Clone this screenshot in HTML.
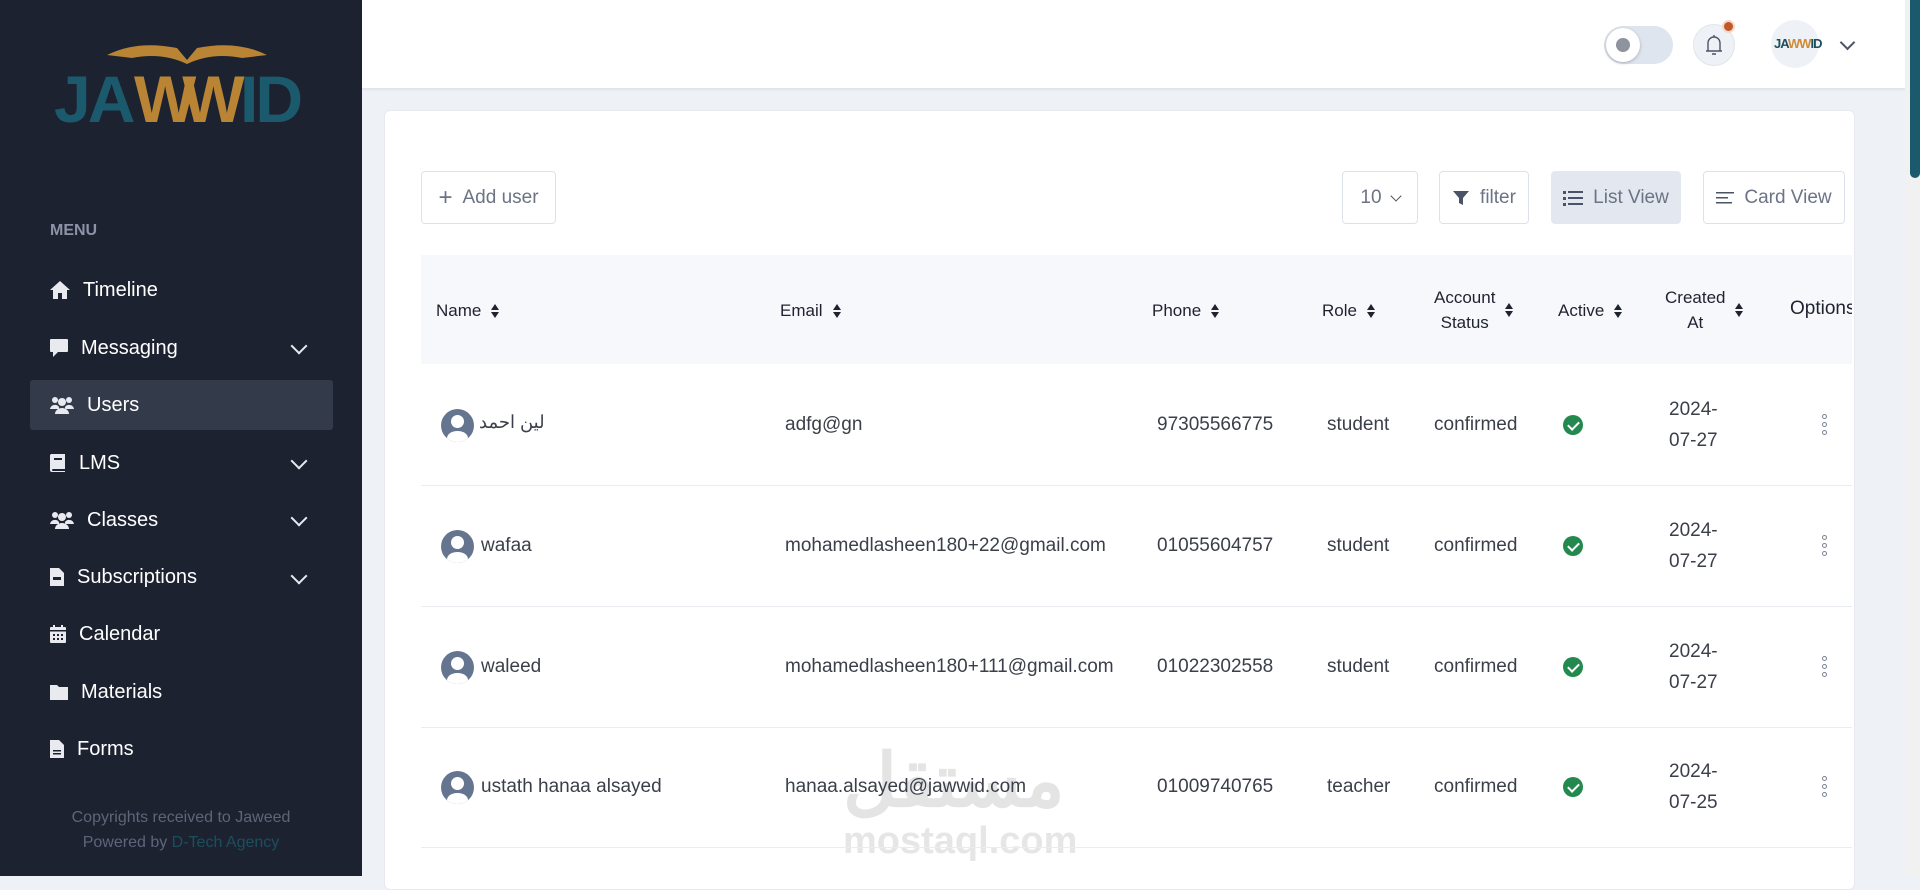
<!DOCTYPE html>
<html><head><meta charset="utf-8"><style>
*{box-sizing:border-box;margin:0;padding:0}
body{width:1920px;height:876px;overflow:hidden;background:#eef2f7;font-family:"Liberation Sans","Noto Sans CJK SC",sans-serif;position:relative;color:#3a3f4b}
.abs{position:absolute}
#side{left:0;top:0;width:362px;height:876px;background:#1d2231}
.mi{position:absolute;left:49px;color:#fff;font-size:20px;display:flex;align-items:center;height:30px}
.mi svg{margin-right:12px}
.chev{position:absolute;left:293px;width:12px;height:12px;border-right:2px solid #e8eaf0;border-bottom:2px solid #e8eaf0;transform:rotate(45deg)}
#hdr{left:362px;top:0;width:1548px;height:89px;background:#fff;border-bottom:1px solid #dfe4ec;box-shadow:0 1px 3px rgba(0,0,0,.06)}
#card{left:384px;top:110px;width:1471px;height:780px;background:#fff;border-radius:6px;border:1px solid #e6eaf0}
.btn{position:absolute;top:171px;height:53px;border:1px solid #dde2ea;border-radius:4px;background:#fff;color:#6b7385;font-size:19px;display:flex;align-items:center;justify-content:center;gap:10px}
.th{position:absolute;font-size:17px;color:#1f2330;display:flex;align-items:center;gap:10px;line-height:25px}
.sort{display:inline-block;width:9px;height:14px;position:relative}
.sort:before,.sort:after{content:"";position:absolute;left:0;border-left:4.5px solid transparent;border-right:4.5px solid transparent}
.sort:before{top:0;border-bottom:6px solid #1f2330}
.sort:after{bottom:0;border-top:6px solid #1f2330}
.td{position:absolute;font-size:19px;color:#3b3f4a}
.dt{line-height:31px}
.row{position:absolute;left:421px;width:1431px;border-top:1px solid #e9ecf0}
.av{position:absolute;width:33px;height:33px;border-radius:50%;background:#66758f;overflow:hidden}
.av:before{content:"";position:absolute;left:10px;top:6px;width:13px;height:13px;border-radius:50%;background:#fff}
.av:after{content:"";position:absolute;left:6px;top:22px;width:21px;height:14px;border-radius:50%;background:#fff}
.ok{position:absolute;width:20px;height:20px;border-radius:50%;background:#23894f}
.ok:after{content:"";position:absolute;left:7px;top:4px;width:5px;height:9px;border-right:2px solid #fff;border-bottom:2px solid #fff;transform:rotate(45deg)}
.dots{position:absolute;width:6px}
.dots i{display:block;width:5px;height:5px;border:1.3px solid #7a8293;border-radius:50%;margin-bottom:3px}
</style></head><body>
<div id="side" class="abs">
  <svg class="abs" style="left:52px;top:30px" width="260" height="100" viewBox="0 0 260 100">
    <path d="M55 25 Q85 10 125 18 L135 30 L145 18 Q185 10 215 25 L190 28 Q160 22 135 34 Q110 22 80 28Z" fill="#b98534"/>
    <text x="2" y="92" font-family="Liberation Sans" font-weight="bold" font-size="66" fill="#1b5a6c" letter-spacing="-3">JA</text>
    <text x="82" y="92" font-family="Liberation Sans" font-weight="bold" font-size="66" fill="#b98534" letter-spacing="-14">WW</text>
    <text x="188" y="92" font-family="Liberation Sans" font-weight="bold" font-size="66" fill="#1b5a6c" letter-spacing="-3">ID</text>
  </svg>
  <div class="abs" style="left:50px;top:222px;font-size:16px;color:#8b93a6;font-weight:bold">MENU</div>
  <div class="abs" style="left:30px;top:380px;width:303px;height:50px;background:#333a4a;border-radius:3px"></div>
  <div class="mi" style="top:275px"><svg width="22" height="20" viewBox="0 0 22 20"><path d="M11 1L1 10h3v9h5v-6h4v6h5v-9h3z" fill="#e8eaf0"/></svg>Timeline</div>
  <div class="mi" style="top:333px"><svg width="20" height="20" viewBox="0 0 20 20"><path d="M2 1h16a1 1 0 0 1 1 1v11a1 1 0 0 1-1 1H9l-5 5v-5H2a1 1 0 0 1-1-1V2a1 1 0 0 1 1-1z" fill="#e8eaf0"/></svg>Messaging</div><div class="chev" style="top:340px"></div>
  <div class="mi" style="top:390px"><svg width="26" height="20" viewBox="0 0 26 20"><circle cx="6" cy="5" r="3" fill="#e8eaf0"/><circle cx="20" cy="5" r="3" fill="#e8eaf0"/><circle cx="13" cy="7" r="4" fill="#e8eaf0"/><path d="M1 14a5 5 0 0 1 9-2v2zM25 14a5 5 0 0 0-9-2v2zM6 19a7 6 0 0 1 14 0z" fill="#e8eaf0"/></svg>Users</div>
  <div class="mi" style="top:448px"><svg width="18" height="20" viewBox="0 0 18 20"><path d="M2 1h14v15H4a1 1 0 0 0 0 2h12v1H3a2 2 0 0 1-2-2V2z" fill="#e8eaf0"/><rect x="5" y="5" width="8" height="2" fill="#1d2231"/></svg>LMS</div><div class="chev" style="top:455px"></div>
  <div class="mi" style="top:505px"><svg width="26" height="20" viewBox="0 0 26 20"><circle cx="6" cy="5" r="3" fill="#e8eaf0"/><circle cx="20" cy="5" r="3" fill="#e8eaf0"/><circle cx="13" cy="7" r="4" fill="#e8eaf0"/><path d="M1 14a5 5 0 0 1 9-2v2zM25 14a5 5 0 0 0-9-2v2zM6 19a7 6 0 0 1 14 0z" fill="#e8eaf0"/></svg>Classes</div><div class="chev" style="top:512px"></div>
  <div class="mi" style="top:562px"><svg width="16" height="20" viewBox="0 0 16 20"><path d="M1 1h9l5 5v13H1z" fill="#e8eaf0"/><rect x="4" y="10" width="8" height="3" fill="#1d2231"/></svg>Subscriptions</div><div class="chev" style="top:570px"></div>
  <div class="mi" style="top:619px"><svg width="18" height="20" viewBox="0 0 18 20"><rect x="1" y="3" width="16" height="16" rx="1" fill="#e8eaf0"/><rect x="4" y="1" width="2" height="4" fill="#e8eaf0"/><rect x="12" y="1" width="2" height="4" fill="#e8eaf0"/><rect x="1" y="6" width="16" height="1.5" fill="#1d2231"/><g fill="#1d2231"><rect x="4" y="10" width="2" height="2"/><rect x="8" y="10" width="2" height="2"/><rect x="12" y="10" width="2" height="2"/><rect x="4" y="14" width="2" height="2"/><rect x="8" y="14" width="2" height="2"/><rect x="12" y="14" width="2" height="2"/></g></svg>Calendar</div>
  <div class="mi" style="top:677px"><svg width="20" height="18" viewBox="0 0 20 18"><path d="M1 2h7l2 2h9v13H1z" fill="#e8eaf0"/></svg>Materials</div>
  <div class="mi" style="top:734px"><svg width="16" height="20" viewBox="0 0 16 20"><path d="M1 1h9l5 5v13H1z" fill="#e8eaf0"/><g fill="#1d2231"><rect x="4" y="11" width="8" height="1.5"/><rect x="4" y="14" width="8" height="1.5"/></g></svg>Forms</div>
  <div class="abs" style="left:0;width:362px;top:805px;text-align:center;font-size:16px;color:#5d6578;line-height:25px">Copyrights received to Jaweed<br>Powered by <span style="color:#1b4f5e">D-Tech Agency</span></div>
</div>
<div id="hdr" class="abs"></div>
<div class="abs" style="left:1604px;top:26px;width:69px;height:38px;border-radius:19px;background:#dfe5ee"></div>
<div class="abs" style="left:1606px;top:28px;width:34px;height:34px;border-radius:50%;background:#fff;box-shadow:0 1px 3px rgba(0,0,0,.25)"></div>
<div class="abs" style="left:1616px;top:38px;width:14px;height:14px;border-radius:50%;background:#8d949e"></div>
<div class="abs" style="left:1693px;top:24px;width:42px;height:42px;border-radius:50%;background:#eef2f7;border:1px solid #e0e5ed"></div>
<svg class="abs" style="left:1704px;top:33px" width="20" height="24" viewBox="0 0 20 24"><path d="M4 18V10a6 6 0 0 1 12 0v8h2H2zM10 2v2M8 21h4" stroke="#4b5366" stroke-width="1.4" fill="none"/></svg>
<div class="abs" style="left:1722px;top:20px;width:13px;height:13px;border-radius:50%;background:#c0582a;border:2px solid #f2d9c8"></div>
<div class="abs" style="left:1771px;top:20px;width:48px;height:48px;border-radius:50%;background:#eef2f7"></div>
<div class="abs" style="left:1774px;top:36px;font-size:13px;font-weight:bold;color:#1b4f5e;letter-spacing:-1px">JA<span style="color:#d08b35">WW</span>ID</div>
<div class="abs" style="left:1842px;top:37px;width:11px;height:11px;border-right:2px solid #4b5366;border-bottom:2px solid #4b5366;transform:rotate(45deg)"></div>
<div class="abs" style="left:1905px;top:0;width:15px;height:876px;background:#f1f1f1"></div>
<div class="abs" style="left:1910px;top:0;width:10px;height:178px;background:#1b5a6c;border-radius:0 0 5px 5px"></div>
<div id="card" class="abs"></div>
<div class="btn" style="left:421px;width:135px"><span style="font-size:24px;font-weight:300">+</span>Add user</div>
<div class="btn" style="left:1342px;width:76px">10 <span style="display:inline-block;width:8px;height:8px;border-right:1.6px solid #555;border-bottom:1.6px solid #555;transform:rotate(45deg);margin-top:-4px"></span></div>
<div class="btn" style="left:1439px;width:90px"><svg width="18" height="18" viewBox="0 0 18 18"><path d="M1 2h16l-6 7v7l-4-2V9z" fill="#4b5366"/></svg>filter</div>
<div class="btn" style="left:1551px;width:130px;background:#e3e8f0;border-color:#e3e8f0"><svg width="20" height="16" viewBox="0 0 20 16"><g fill="#4b5366"><rect x="0" y="1" width="3" height="3"/><rect x="0" y="7" width="3" height="3"/><rect x="0" y="13" width="3" height="3"/><rect x="5" y="1" width="15" height="2"/><rect x="5" y="7" width="15" height="2"/><rect x="5" y="13" width="15" height="2"/></g></svg>List View</div>
<div class="btn" style="left:1703px;width:142px"><svg width="18" height="14" viewBox="0 0 18 14"><g fill="#4b5366"><rect y="1" width="18" height="1.5"/><rect y="6" width="12" height="1.5"/><rect y="11" width="16" height="1.5"/></g></svg>Card View</div>
<div class="abs" style="left:421px;top:255px;width:1431px;height:109px;background:#f6f8fb"></div>
<div class="th" style="left:436px;top:298px">Name <span class="sort"></span></div>
<div class="th" style="left:780px;top:298px">Email <span class="sort"></span></div>
<div class="th" style="left:1152px;top:298px">Phone <span class="sort"></span></div>
<div class="th" style="left:1322px;top:298px">Role <span class="sort"></span></div>
<div class="th" style="left:1434px;top:285px;text-align:center"><span>Account<br>Status</span> <span class="sort"></span></div>
<div class="th" style="left:1558px;top:298px">Active <span class="sort"></span></div>
<div class="th" style="left:1665px;top:285px;text-align:center"><span>Created<br>At</span> <span class="sort"></span></div>
<div class="th" style="left:1790px;top:296px;font-size:19px;width:62px;overflow:hidden;white-space:nowrap">Options</div>
<div class="abs" style="left:843px;top:738px;font-size:74px;font-weight:bold;color:#e4e4e4;font-family:'Liberation Sans','Noto Sans CJK SC',sans-serif">مستقل</div>
<div class="abs" style="left:843px;top:820px;font-size:38px;font-weight:bold;color:#e6e6e6">mostaql.com</div>
<div class="row" style="top:485px"></div><div class="row" style="top:606px"></div><div class="row" style="top:727px"></div><div class="row" style="top:847px"></div>

<div class="av" style="left:441px;top:409px"></div><div class="td" style="left:479px;top:412px;font-size:18px">لين احمد</div>
<div class="td" style="left:785px;top:414px">adfg@gn</div><div class="td" style="left:1157px;top:414px">97305566775</div>
<div class="td" style="left:1327px;top:414px">student</div><div class="td" style="left:1434px;top:414px">confirmed</div>
<div class="ok" style="left:1563px;top:415px"></div><div class="td dt" style="left:1669px;top:394px">2024-<br>07-27</div>
<div class="dots" style="left:1822px;top:414px"><i></i><i></i><i></i></div>

<div class="av" style="left:441px;top:530px"></div><div class="td" style="left:481px;top:535px">wafaa</div>
<div class="td" style="left:785px;top:535px">mohamedlasheen180+22@gmail.com</div><div class="td" style="left:1157px;top:535px">01055604757</div>
<div class="td" style="left:1327px;top:535px">student</div><div class="td" style="left:1434px;top:535px">confirmed</div>
<div class="ok" style="left:1563px;top:536px"></div><div class="td dt" style="left:1669px;top:515px">2024-<br>07-27</div>
<div class="dots" style="left:1822px;top:535px"><i></i><i></i><i></i></div>

<div class="av" style="left:441px;top:651px"></div><div class="td" style="left:481px;top:656px">waleed</div>
<div class="td" style="left:785px;top:656px">mohamedlasheen180+111@gmail.com</div><div class="td" style="left:1157px;top:656px">01022302558</div>
<div class="td" style="left:1327px;top:656px">student</div><div class="td" style="left:1434px;top:656px">confirmed</div>
<div class="ok" style="left:1563px;top:657px"></div><div class="td dt" style="left:1669px;top:636px">2024-<br>07-27</div>
<div class="dots" style="left:1822px;top:656px"><i></i><i></i><i></i></div>

<div class="av" style="left:441px;top:771px"></div><div class="td" style="left:481px;top:776px">ustath hanaa alsayed</div>
<div class="td" style="left:785px;top:776px">hanaa.alsayed@jawwid.com</div><div class="td" style="left:1157px;top:776px">01009740765</div>
<div class="td" style="left:1327px;top:776px">teacher</div><div class="td" style="left:1434px;top:776px">confirmed</div>
<div class="ok" style="left:1563px;top:777px"></div><div class="td dt" style="left:1669px;top:756px">2024-<br>07-25</div>
<div class="dots" style="left:1822px;top:776px"><i></i><i></i><i></i></div>
</body></html>
